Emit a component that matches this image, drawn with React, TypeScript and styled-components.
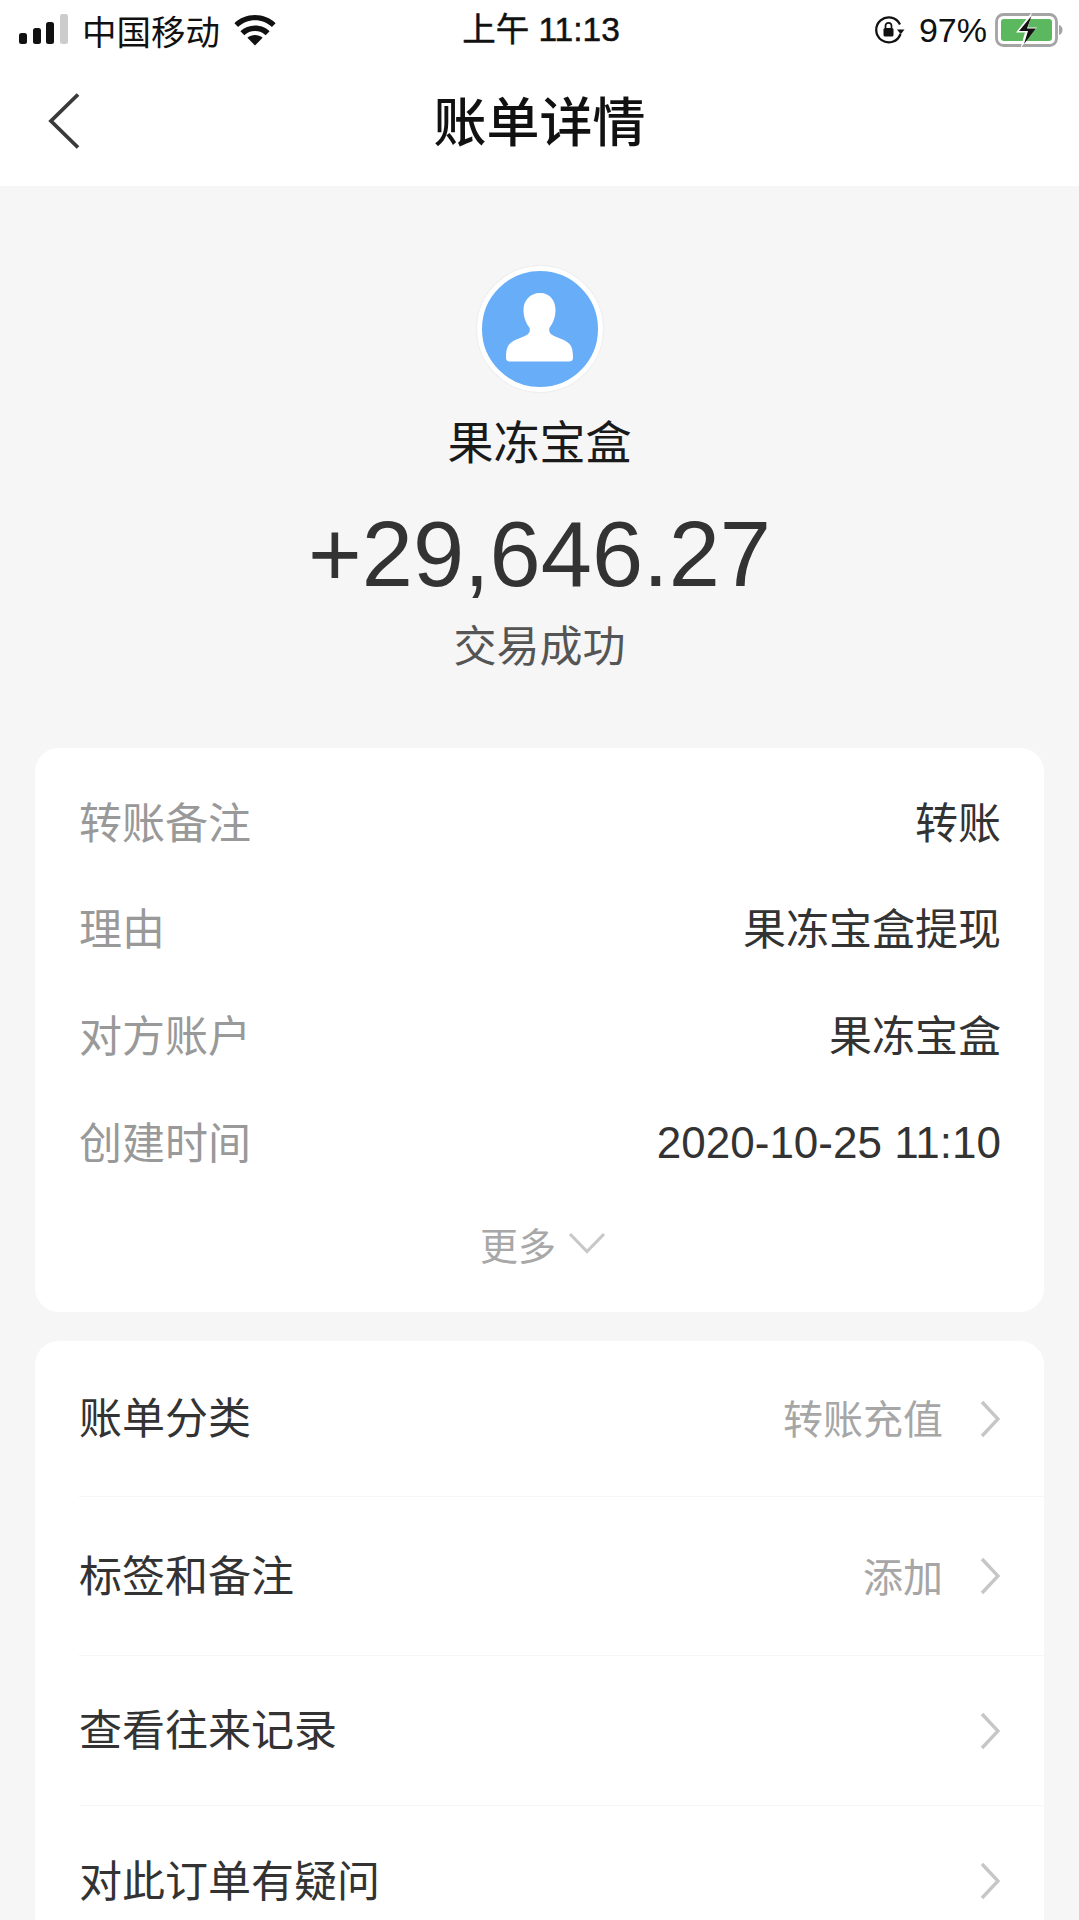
import React from "react";
import styled, { createGlobalStyle } from "styled-components";

const CJK = `"Noto Sans CJK SC", "Liberation Sans", sans-serif`;
const LATIN = `"Liberation Sans", "Noto Sans CJK SC", sans-serif`;

const Global = createGlobalStyle`
  html, body { margin: 0; padding: 0; background: #f6f6f6; }
  * { box-sizing: border-box; }
`;

const Page = styled.div`
  width: 1079px;
  height: 1920px;
  overflow: hidden;
  background: #f6f6f6;
  font-family: ${CJK};
  color: #333;
`;

const TopArea = styled.header`
  background: #fff;
  height: 186px;
  display: flex;
  flex-direction: column;
`;

const StatusBar = styled.div`
  height: 60px;
  padding: 0 16px 0 19px;
  display: grid;
  grid-template-columns: 1fr auto 1fr;
  align-items: center;
  color: #111;
`;

const StatusLeft = styled.div`
  display: flex;
  align-items: center;
  gap: 14px;
`;

const StatusRight = styled.div`
  display: flex;
  align-items: center;
  justify-content: flex-end;
  gap: 14px;
`;

const Carrier = styled.span`
  font-size: 34.5px;
  line-height: 40px;
`;

const Clock = styled.span`
  font-family: ${LATIN};
  font-size: 33.5px;
  line-height: 40px;
  -webkit-text-stroke: 0.5px #111;
`;

const Battery = styled.span`
  font-family: ${LATIN};
  font-size: 34px;
  line-height: 40px;
  margin-right: -6px;
`;

const NavBar = styled.div`
  position: relative;
  flex: 1;
  padding-bottom: 8px;
  display: flex;
  align-items: center;
  justify-content: center;
`;

const BackIcon = styled.svg`
  position: absolute;
  left: 47px;
  top: 33px;
`;

const Title = styled.h1`
  margin: 0;
  font-size: 53px;
  line-height: 60px;
  font-weight: 500;
  color: #111;
`;

const Hero = styled.section`
  padding-top: 80px;
  display: flex;
  flex-direction: column;
  align-items: center;
`;

const Avatar = styled.div`
  width: 126px;
  height: 126px;
  border-radius: 50%;
  background: #68adf7;
  border: 5px solid #fff;
  box-shadow: 0 0 2px rgba(0, 0, 0, 0.12);
  display: flex;
  align-items: center;
  justify-content: center;
`;

const Name = styled.div`
  margin-top: 17px;
  font-size: 46px;
  line-height: 60px;
  color: #1a1a1a;
`;

const Amount = styled.div`
  margin-top: 35px;
  font-family: ${LATIN};
  font-size: 92px;
  line-height: 100px;
  color: #333;
`;

const TradeState = styled.div`
  margin-top: 9px;
  font-size: 43px;
  line-height: 60px;
  color: #555;
`;

const Card = styled.section<{ $top: number }>`
  margin: ${(p) => p.$top}px 35px 0;
  background: #fff;
  border-radius: 24px;
`;

const InfoCard = styled(Card)`
  padding: 22px 43px 18px 44px;
`;

const InfoRow = styled.div`
  height: 106.6px;
  padding-bottom: 7px;
  display: flex;
  align-items: center;
  justify-content: space-between;
  font-size: 43px;
`;

const InfoLabel = styled.span`
  color: #999;
`;

const InfoValue = styled.span<{ $latin?: boolean }>`
  color: #333;
  font-family: ${(p) => (p.$latin ? LATIN : CJK)};
  font-size: ${(p) => (p.$latin ? "44px" : "43px")};
  padding-top: ${(p) => (p.$latin ? "7px" : "0")};
`;

const More = styled.div`
  height: 98px;
  padding: 0 0 4px 6px;
  display: flex;
  align-items: center;
  justify-content: center;
  gap: 12px;
  font-size: 38px;
  color: #a8a8a8;
`;

const ActionCard = styled(Card)`
  padding-left: 44px;
  border-radius: 24px 24px 0 0;
`;

const ActionRow = styled.div<{ $h: number; $last?: boolean }>`
  height: ${(p) => p.$h}px;
  padding-right: 44px;
  display: flex;
  align-items: center;
  border-bottom: ${(p) => (p.$last ? "none" : "1px solid #f6f6f6")};
`;

const ActionLabel = styled.span`
  flex: 1;
  font-size: 43px;
  padding-bottom: 7px;
  color: #333;
`;

const ActionValue = styled.span`
  font-size: 40px;
  padding-bottom: 3px;
  color: #a6a6a6;
  margin-right: 37px;
`;

const Bars = () => (
  <svg width="49" height="32" viewBox="0 0 49 32" style={{ display: "block" }}>
    <rect x="0" y="19" width="8" height="11" rx="2.5" fill="#111" />
    <rect x="14" y="14" width="8" height="16" rx="2.5" fill="#111" />
    <rect x="27" y="8" width="8" height="22" rx="2.5" fill="#111" />
    <rect x="41" y="0" width="8" height="30" rx="2.5" fill="#ccc" />
  </svg>
);

const Wifi = () => (
  <svg width="42" height="32" viewBox="0 0 42 32">
    <path d="M21 31.500 13.400 23.800C17.800 20 24.200 20 28.600 23.800Z" fill="#111" />
    <path d="M21 11.500c-5.600 0-10.800 2.100-14.600 5.800l3.900 3.900c2.800-2.600 6.600-4.200 10.700-4.200s7.900 1.600 10.700 4.200l3.900-3.900C32 13.600 26.600 11.500 21 11.500Z" fill="#111" />
    <path d="M21 1C13 1 5.700 4 .4 9.200l3.700 3.900C8.500 8.800 14.500 6.300 21 6.300s12.500 2.500 16.900 6.800l3.700-3.900C36.300 4 29 1 21 1Z" fill="#111" />
  </svg>
);

const RotationLock = () => (
  <svg width="31" height="30" viewBox="0 0 31 30">
    <path d="M26.500 19A12.500 12.500 0 1 1 26 9.500" fill="none" stroke="#111" strokeWidth="2.300" />
    <path d="M23 14.500h7.500l-3.700 4.800Z" fill="#111" />
    <rect x="9.500" y="13" width="10" height="8.500" rx="1.500" fill="#111" />
    <path d="M11.500 13v-2.200a3 3 0 0 1 6 0V13" fill="none" stroke="#111" strokeWidth="1.700" />
  </svg>
);

const BatteryIcon = () => (
  <svg width="68" height="36" viewBox="0 0 68 36">
    <rect x="1.500" y="2.500" width="60" height="31" rx="7" fill="none" stroke="#a4a4a4" strokeWidth="2.800" />
    <rect x="6" y="7" width="51" height="22" rx="3" fill="#5cb85f" />
    <path d="M64 13c2.500.8 3.500 2.800 3.500 5s-1 4.200-3.500 5Z" fill="#a4a4a4" />
    <path d="M37 0 21 20.500H30L25.500 36 42 15.500h-9Z" fill="#fff" />
    <path d="M36.500 4 24 19h9L29 32l12-15.500h-9Z" fill="#111" />
  </svg>
);

const Person = () => (
  <svg width="70" height="72" viewBox="0 0 70 72" style={{ marginTop: -2 }}>
    <path
      d="M35 1c10.500 0 15.500 8 15.500 17 0 7-2.500 13-5.500 17-1.500 2-1 5.500 1.500 7.500 4 3 13 4.500 18 9.500 3 3 3.500 9 3.500 13.500 0 3-1.500 4-4 4H5c-2.500 0-4-1-4-4 0-4.500.5-10.500 3.500-13.500 5-5 14-6.500 18-9.500 2.500-2 3-5.500 1.500-7.500-3-4-5.500-10-5.500-17C18.500 9 24.500 1 35 1Z"
      fill="#fff"
    />
  </svg>
);

const Back = () => (
  <BackIcon width="34" height="56" viewBox="0 0 34 56">
    <path d="M31 1.500 4 28l27 26.500" fill="none" stroke="#3a3a3a" strokeWidth="3.800" />
  </BackIcon>
);

const ChevronDown = () => (
  <svg width="38" height="22" viewBox="0 0 38 22">
    <path d="M2 2 19 19.500 36 2" fill="none" stroke="#c8c8c8" strokeWidth="3.200" />
  </svg>
);

const ChevronRight = () => (
  <svg width="20" height="38" viewBox="0 0 20 38">
    <path d="M2 2 18 19 2 36" fill="none" stroke="#c6c6c6" strokeWidth="3.400" />
  </svg>
);

const info: { label: string; value: string; latin?: boolean }[] = [
  { label: "转账备注", value: "转账" },
  { label: "理由", value: "果冻宝盒提现" },
  { label: "对方账户", value: "果冻宝盒" },
  { label: "创建时间", value: "2020-10-25 11:10", latin: true },
];

const actions: { label: string; value?: string; h: number }[] = [
  { label: "账单分类", value: "转账充值", h: 156 },
  { label: "标签和备注", value: "添加", h: 159 },
  { label: "查看往来记录", h: 150 },
  { label: "对此订单有疑问", h: 150 },
];

export default function App() {
  return (
    <Page>
      <Global />
      <TopArea>
        <StatusBar>
          <StatusLeft>
            <Bars />
            <Carrier>中国移动</Carrier>
            <Wifi />
          </StatusLeft>
          <Clock>上午 11:13</Clock>
          <StatusRight>
            <RotationLock />
            <Battery>97%</Battery>
            <BatteryIcon />
          </StatusRight>
        </StatusBar>
        <NavBar>
          <Back />
          <Title>账单详情</Title>
        </NavBar>
      </TopArea>
      <Hero>
        <Avatar>
          <Person />
        </Avatar>
        <Name>果冻宝盒</Name>
        <Amount>+29,646.27</Amount>
        <TradeState>交易成功</TradeState>
      </Hero>
      <InfoCard $top={75}>
        {info.map((r) => (
          <InfoRow key={r.label}>
            <InfoLabel>{r.label}</InfoLabel>
            <InfoValue $latin={r.latin}>{r.value}</InfoValue>
          </InfoRow>
        ))}
        <More>
          更多
          <ChevronDown />
        </More>
      </InfoCard>
      <ActionCard $top={29}>
        {actions.map((a, i) => (
          <ActionRow key={a.label} $h={a.h} $last={i === actions.length - 1}>
            <ActionLabel>{a.label}</ActionLabel>
            {a.value && <ActionValue>{a.value}</ActionValue>}
            <ChevronRight />
          </ActionRow>
        ))}
      </ActionCard>
    </Page>
  );
}
